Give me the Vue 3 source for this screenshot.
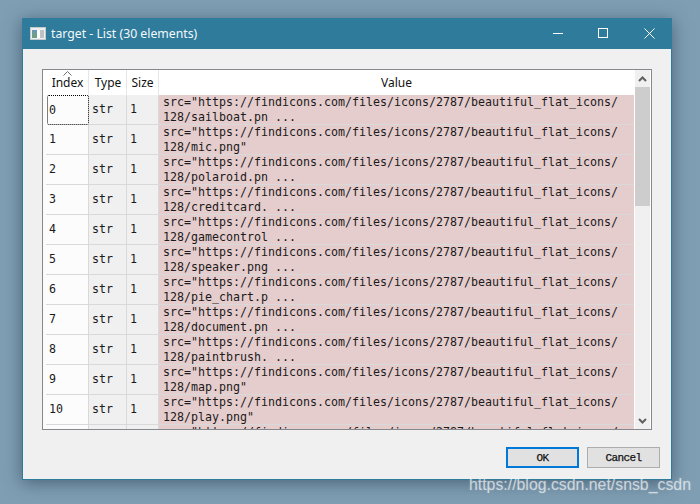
<script setup>
const names = ['sailboat.pn ...','mic.png"','polaroid.pn ...','creditcard. ...','gamecontrol ...','speaker.png ...','pie_chart.p ...','document.pn ...','paintbrush. ...','map.png"','play.png"']
const prefix = 'src="https://findicons.com/files/icons/2787/beautiful_flat_icons/'
const rows = names.map((n, i) => ({ i, line2: '128/' + n }))
</script>

<template>
  <div class="desktop">
    <div class="window">
      <div class="titlebar">
        <svg class="appicon" width="16" height="13" viewBox="0 0 16 13">
          <rect x="0.5" y="0.5" width="15" height="12" fill="#eef0f0" stroke="#c4cacd"/>
          <rect x="2" y="3" width="5" height="8" fill="#6f9f8c"/>
          <rect x="2" y="3" width="5" height="3" fill="#6c97b0"/>
          <rect x="7" y="3" width="3" height="8" fill="#ffffff"/>
          <rect x="10" y="3" width="4" height="8" fill="#bcc3c6"/>
        </svg>
        <span class="title">target - List (30 elements)</span>
        <div class="controls">
          <svg width="11" height="11" viewBox="0 0 11 11"><path d="M1 5.5H11" stroke="#fff" fill="none"/></svg>
          <svg width="11" height="11" viewBox="0 0 11 11"><rect x="0.5" y="0.5" width="9" height="9" stroke="#fff" fill="none"/></svg>
          <svg width="11" height="11" viewBox="0 0 11 11"><path d="M0.5 0.5L10.5 10.5M10.5 0.5L0.5 10.5" stroke="#fff" fill="none"/></svg>
        </div>
      </div>
      <div class="content">
        <div class="tablebox">
          <div class="table">
            <div class="head row">
              <span class="gutter"></span>
              <span class="hcell nudge">Index<svg class="sort" width="9" height="5" viewBox="0 0 9 5"><path d="M0.5 4.5L4.5 0.5L8.5 4.5" stroke="#6d6d6d" fill="none"/></svg></span>
              <span class="hcell nudge">Type</span>
              <span class="hcell">Size</span>
              <span class="hcell last">Value</span>
            </div>
            <div v-for="r in rows" :key="r.i" class="row body">
              <span class="gutter"></span>
              <span class="cell idx" :class="{ focus: r.i === 0 }">{{ r.i }}</span>
              <span class="cell kind">str</span>
              <span class="cell kind">1</span>
              <span class="cell val"><span>{{ prefix }}</span><span>{{ r.line2 }}</span></span>
            </div>
            <div class="row body">
              <span class="gutter"></span>
              <span class="cell idx"></span>
              <span class="cell kind"></span>
              <span class="cell kind"></span>
              <span class="cell val"><span>{{ prefix }}</span></span>
            </div>
          </div>
          <div class="scrollbar">
            <div class="arrow">
              <svg width="9" height="6" viewBox="0 0 9 6"><path d="M1 5L4.5 1.5L8 5" stroke="#606060" stroke-width="2" fill="none"/></svg>
            </div>
            <div class="thumb"></div>
            <div class="track"></div>
            <div class="arrow">
              <svg width="9" height="6" viewBox="0 0 9 6"><path d="M1 1L4.5 4.5L8 1" stroke="#606060" stroke-width="2" fill="none"/></svg>
            </div>
          </div>
        </div>
        <div class="actions">
          <button class="btn primary">OK</button>
          <button class="btn">Cancel</button>
        </div>
      </div>
    </div>
    <div class="watermark">https://blog.csdn.net/snsb_csdn</div>
  </div>
</template>

<style>
html, body { margin: 0; padding: 0; }
</style>

<style scoped>
.desktop {
  position: relative;
  width: 700px;
  height: 504px;
  overflow: hidden;
  box-sizing: border-box;
  padding: 18px 28px 24px 22px;
  background: #7f9eb3;
}
.window {
  width: 650px;
  height: 462px;
  box-sizing: border-box;
  border: 1px solid #2e7b9c;
  border-top: 0;
  background: #f0f0f0;
  display: flex;
  flex-direction: column;
  box-shadow: 0 3px 16px rgba(20, 40, 60, 0.5);
}
.titlebar {
  height: 31px;
  flex: none;
  background: #2e7b9c;
  display: flex;
  align-items: center;
  padding-left: 7px;
  color: #fff;
}
.appicon { flex: none; }
.title {
  margin-left: 5px;
  font: 12.25px/16px "Noto Sans", sans-serif;
  color: #f4f8fa;
}
.controls {
  margin-left: auto;
  display: flex;
  gap: 35px;
  padding-right: 16px;
  align-items: center;
}
.content {
  flex: 1;
  min-height: 0;
  padding: 20px 19px 0 19px;
  display: flex;
  flex-direction: column;
}
.tablebox {
  height: 361px;
  flex: none;
  box-sizing: border-box;
  border: 1px solid #85888c;
  background: #fff;
  display: flex;
  overflow: hidden;
}
.table {
  flex: none;
  width: 591px;
  overflow: hidden;
}
.row {
  display: grid;
  grid-template-columns: 3px 43px 38px 32px 475px;
}
.head { height: 25px; background: #fff; }
.gutter { background: #fbfbfb; }
.head .gutter { background: #fff; }
.hcell {
  position: relative;
  box-sizing: border-box;
  border-right: 1px solid #e6e6e6;
  text-align: center;
  font: 12px/26px "Noto Sans", sans-serif;
  color: #111;
}
.hcell.nudge { padding-left: 1px; }
.hcell.last { border-right: 0; }
.sort { position: absolute; left: 17px; top: 1px; }
.body { height: 30px; }
.cell {
  box-sizing: border-box;
  height: 30px;
  border-right: 1px solid #d9d9d9;
  border-bottom: 1px solid #d9d9d9;
  padding-left: 3px;
  font: 11.63px/29px "DejaVu Sans Mono", monospace;
  color: #1a1a1a;
  white-space: pre;
  overflow: hidden;
}
.idx { background: #fcfcfc; }
.idx.focus {
  margin-left: 1px;
  border: 1px dotted #000;
  border-radius: 2px;
  padding-left: 1px;
  line-height: 28px;
}
.kind { background: #f0f0f0; }
.val {
  display: flex;
  flex-direction: column;
  background: #e6cdcd;
  border-right: 0;
  padding: 0 0 0 4px;
  line-height: 14.5px;
}
.scrollbar {
  margin-left: 1px;
  width: 15px;
  flex: none;
  background: #f0f0f0;
  display: flex;
  flex-direction: column;
}
.arrow {
  height: 17px;
  flex: none;
  display: flex;
  align-items: center;
  justify-content: center;
}
.thumb { height: 119px; flex: none; background: #cdcdcd; }
.track { flex: 1; }
.actions {
  display: flex;
  justify-content: flex-end;
  gap: 8px;
  margin-top: 17px;
  margin-right: -8px;
}
.btn {
  width: 73px;
  height: 21px;
  box-sizing: border-box;
  border: 1px solid #adadad;
  background: #e1e1e1;
  padding: 0;
  font: 11px/18px "Liberation Mono", monospace;
  letter-spacing: -0.6px;
  -webkit-text-stroke: 0.25px #111;
  color: #111;
}
.primary { border: 2px solid #0078d7; }
.watermark {
  position: absolute;
  left: 469px;
  top: 475px;
  font: 15.85px/20px "Liberation Sans", sans-serif;
  color: rgba(255, 255, 255, 0.62);
  text-shadow: 0 0 2px rgba(255, 255, 255, 0.25);
  white-space: nowrap;
}
</style>
